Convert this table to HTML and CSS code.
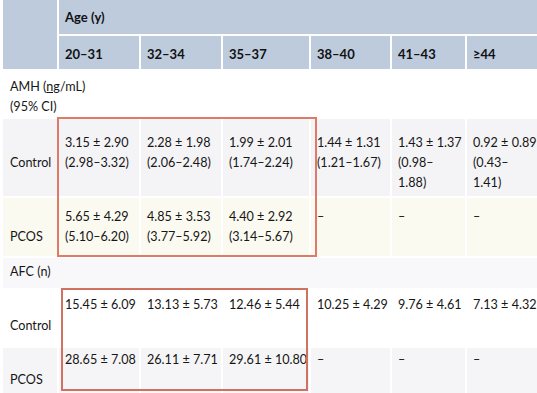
FILE: index.html
```html
<!DOCTYPE html>
<html lang="en">
<head>
    <meta charset="UTF-8">
    <meta name="viewport" content="width=device-width, initial-scale=1.0">
    <title>AMH and AFC by age</title>
    <link rel="stylesheet" href="styles.css">
</head>
<body>
    <div class="sheet">
        <table class="ages">
            <colgroup>
                <col class="c-label">
                <col class="c-a">
                <col class="c-b">
                <col class="c-c">
                <col class="c-d">
                <col class="c-e">
                <col class="c-f">
            </colgroup>
            <thead>
                <tr class="head-top">
                    <th rowspan="2"></th>
                    <th colspan="6">Age (y)</th>
                </tr>
                <tr class="head-sub">
                    <th>20–31</th>
                    <th>32–34</th>
                    <th>35–37</th>
                    <th>38–40</th>
                    <th>41–43</th>
                    <th>≥44</th>
                </tr>
            </thead>
            <tbody>
                <tr class="group amh">
                    <td colspan="7">AMH (<u>ng</u>/mL)<br>(95% CI)</td>
                </tr>
                <tr class="amh-control">
                    <td class="label">Control</td>
                    <td>3.15 ± 2.90<br>(2.98–3.32)</td>
                    <td>2.28 ± 1.98<br>(2.06–2.48)</td>
                    <td>1.99 ± 2.01<br>(1.74–2.24)</td>
                    <td>1.44 ± 1.31<br>(1.21–1.67)</td>
                    <td>1.43 ± 1.37<br>(0.98–<br>1.88)</td>
                    <td>0.92 ± 0.89<br>(0.43–<br>1.41)</td>
                </tr>
                <tr class="amh-pcos">
                    <td class="label">PCOS</td>
                    <td>5.65 ± 4.29<br>(5.10–6.20)</td>
                    <td>4.85 ± 3.53<br>(3.77–5.92)</td>
                    <td>4.40 ± 2.92<br>(3.14–5.67)</td>
                    <td>–</td>
                    <td>–</td>
                    <td>–</td>
                </tr>
                <tr class="group afc">
                    <td colspan="7">AFC (n)</td>
                </tr>
                <tr class="afc-control">
                    <td class="label">Control</td>
                    <td>15.45 ± 6.09</td>
                    <td>13.13 ± 5.73</td>
                    <td>12.46 ± 5.44</td>
                    <td>10.25 ± 4.29</td>
                    <td>9.76 ± 4.61</td>
                    <td>7.13 ± 4.32</td>
                </tr>
                <tr class="afc-pcos">
                    <td class="label">PCOS</td>
                    <td>28.65 ± 7.08</td>
                    <td>26.11 ± 7.71</td>
                    <td>29.61 ± 10.80</td>
                    <td>–</td>
                    <td>–</td>
                    <td>–</td>
                </tr>
            </tbody>
        </table>
        <div class="mark mark-amh"></div>
        <div class="mark mark-afc"></div>
    </div>
</body>
</html>
```

FILE: styles.css
```css
body { margin: 0; background: #fff; overflow: hidden; font-family: Lato, "Open Sans", sans-serif; font-size: 12.6px; color: #161616; }
.sheet { position: relative; width: 537px; height: 393px; overflow: hidden; }

.ages { table-layout: fixed; width: 548px; border-collapse: separate; border-spacing: 2px; margin: -2px 0 0 1px; background: #fff; }
.c-label { width: 54px; }
.c-a { width: 80px; }
.c-b { width: 80px; }
.c-c { width: 86px; }
.c-d { width: 79px; }
.c-e { width: 73px; }
.c-f { width: 80px; }

.ages th, .ages td { text-align: left; white-space: nowrap; line-height: 20px; padding: 0 0 0 6px; }
.ages th { background: #bdcbdd; color: #111; font-weight: 700; font-size: 13px; vertical-align: middle; }
.ages td { vertical-align: top; }
.ages td.label { padding-left: 7px; }

.head-top { height: 34px; }
.head-sub { height: 33px; }
.head-sub th { padding-top: 3px; }

.group td { padding-left: 7px; }
.amh { height: 46px; }
.amh td { background: #fff; padding-top: 6px; }
.afc { height: 30px; }
.afc td { background: #f8f8fa; padding-top: 4px; }

.amh-control { height: 77px; }
.amh-control td { background: #f4f4f6; padding-top: 14px; }
.amh-control td.label { padding-top: 34px; }

.amh-pcos { height: 58px; }
.amh-pcos td { background: #fbfaf1; padding-top: 9px; }
.amh-pcos td.label { padding-top: 29px; }

.afc-control { height: 56px; }
.afc-control td { background: #fff; padding-top: 5px; }
.afc-control td.label { padding-top: 26px; }

.afc-pcos { height: 50px; }
.afc-pcos td { background: #f5f5f7; padding-top: 2px; }
.afc-pcos td.label { padding-top: 22px; }

.mark { position: absolute; box-sizing: border-box; border: 2px solid #de7a68; }
.mark-amh { left: 57px; top: 117px; width: 260px; height: 140px; }
.mark-afc { left: 61px; top: 288px; width: 247px; height: 103px; border-color: #cf7262; }
```
